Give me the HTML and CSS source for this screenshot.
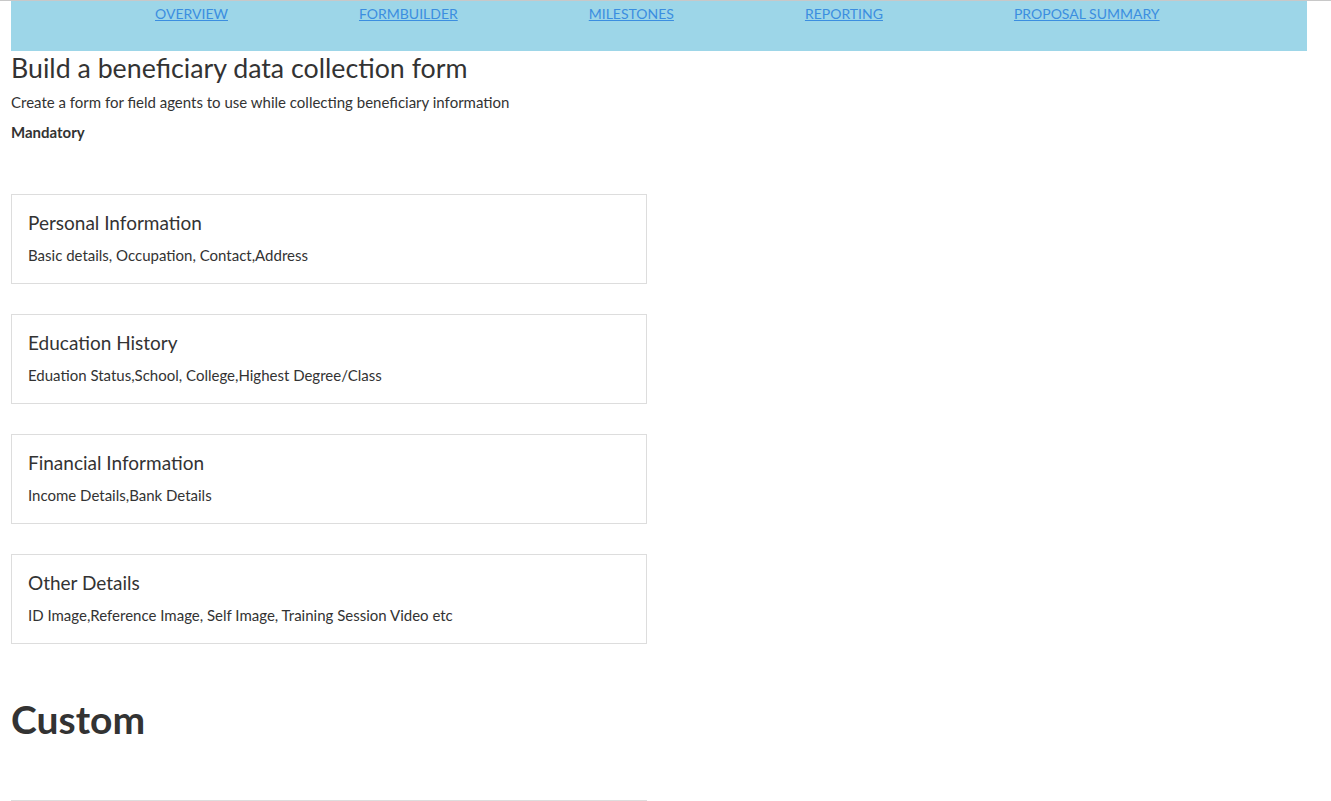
FILE: index.html
```html
<!DOCTYPE html>
<html>
<head>
<meta charset="utf-8">
<link rel="stylesheet" href="styles.css">
</head>
<body>
<div class="page">
  <nav class="nav">
    <a href="#" class="nav-link">OVERVIEW</a>
    <a href="#" class="nav-link">FORMBUILDER</a>
    <a href="#" class="nav-link">MILESTONES</a>
    <a href="#" class="nav-link">REPORTING</a>
    <a href="#" class="nav-link">PROPOSAL SUMMARY</a>
  </nav>
  <h1 class="title">Build a beneficiary data collection form</h1>
  <p class="subtitle">Create a form for field agents to use while collecting beneficiary information</p>
  <p class="label">Mandatory</p>
  <div class="cards">
    <div class="card">
      <div class="card-title">Personal Information</div>
      <div class="card-text">Basic details, Occupation, Contact,Address</div>
    </div>
    <div class="card">
      <div class="card-title">Education History</div>
      <div class="card-text">Eduation Status,School, College,Highest Degree/Class</div>
    </div>
    <div class="card">
      <div class="card-title">Financial Information</div>
      <div class="card-text">Income Details,Bank Details</div>
    </div>
    <div class="card">
      <div class="card-title">Other Details</div>
      <div class="card-text">ID Image,Reference Image, Self Image, Training Session Video etc</div>
    </div>
  </div>
  <h2 class="custom">Custom</h2>
  <div class="card card-empty"></div>
</div>
</body>
</html>
```

FILE: styles.css
```css
html, body {
  margin: 0;
  padding: 0;
  background: #fff;
}
body {
  font-family: Lato, "Open Sans", sans-serif;
  color: #333;
  border-top: 1px solid #c8c8c8;
}
.page {
  padding-left: 11px;
  width: 1296px;
}
.nav {
  background: #9dd6e8;
  height: 50px;
  display: flex;
  align-items: flex-start;
  gap: 131px;
  padding: 4px 0 0 144px;
  box-sizing: border-box;
}
.nav-link {
  color: #3b8ee0;
  font-size: 14px;
  text-decoration: underline;
  line-height: 17px;
}
.title {
  font-size: 26.75px;
  font-weight: 400;
  margin: 0;
  line-height: 34px;
}
.subtitle {
  font-size: 15px;
  margin: 7px 0 0;
  line-height: 20px;
}
.label {
  font-size: 15px;
  font-weight: 700;
  margin: 10px 0 0;
  line-height: 20px;
}
.cards {
  margin-top: 52px;
  display: flex;
  flex-direction: column;
  gap: 30px;
  width: 636px;
}
.card {
  border: 1px solid #ddd;
  height: 90px;
  box-sizing: border-box;
  padding: 17px 16px 0;
}
.card-title {
  font-size: 19px;
  line-height: 22px;
}
.card-text {
  font-size: 15px;
  line-height: 20px;
  margin-top: 11px;
}
.custom {
  font-size: 39px;
  font-weight: 700;
  margin: 52px 0 0;
  line-height: 46px;
}
.card-empty {
  width: 636px;
  margin-top: 58px;
}
```
